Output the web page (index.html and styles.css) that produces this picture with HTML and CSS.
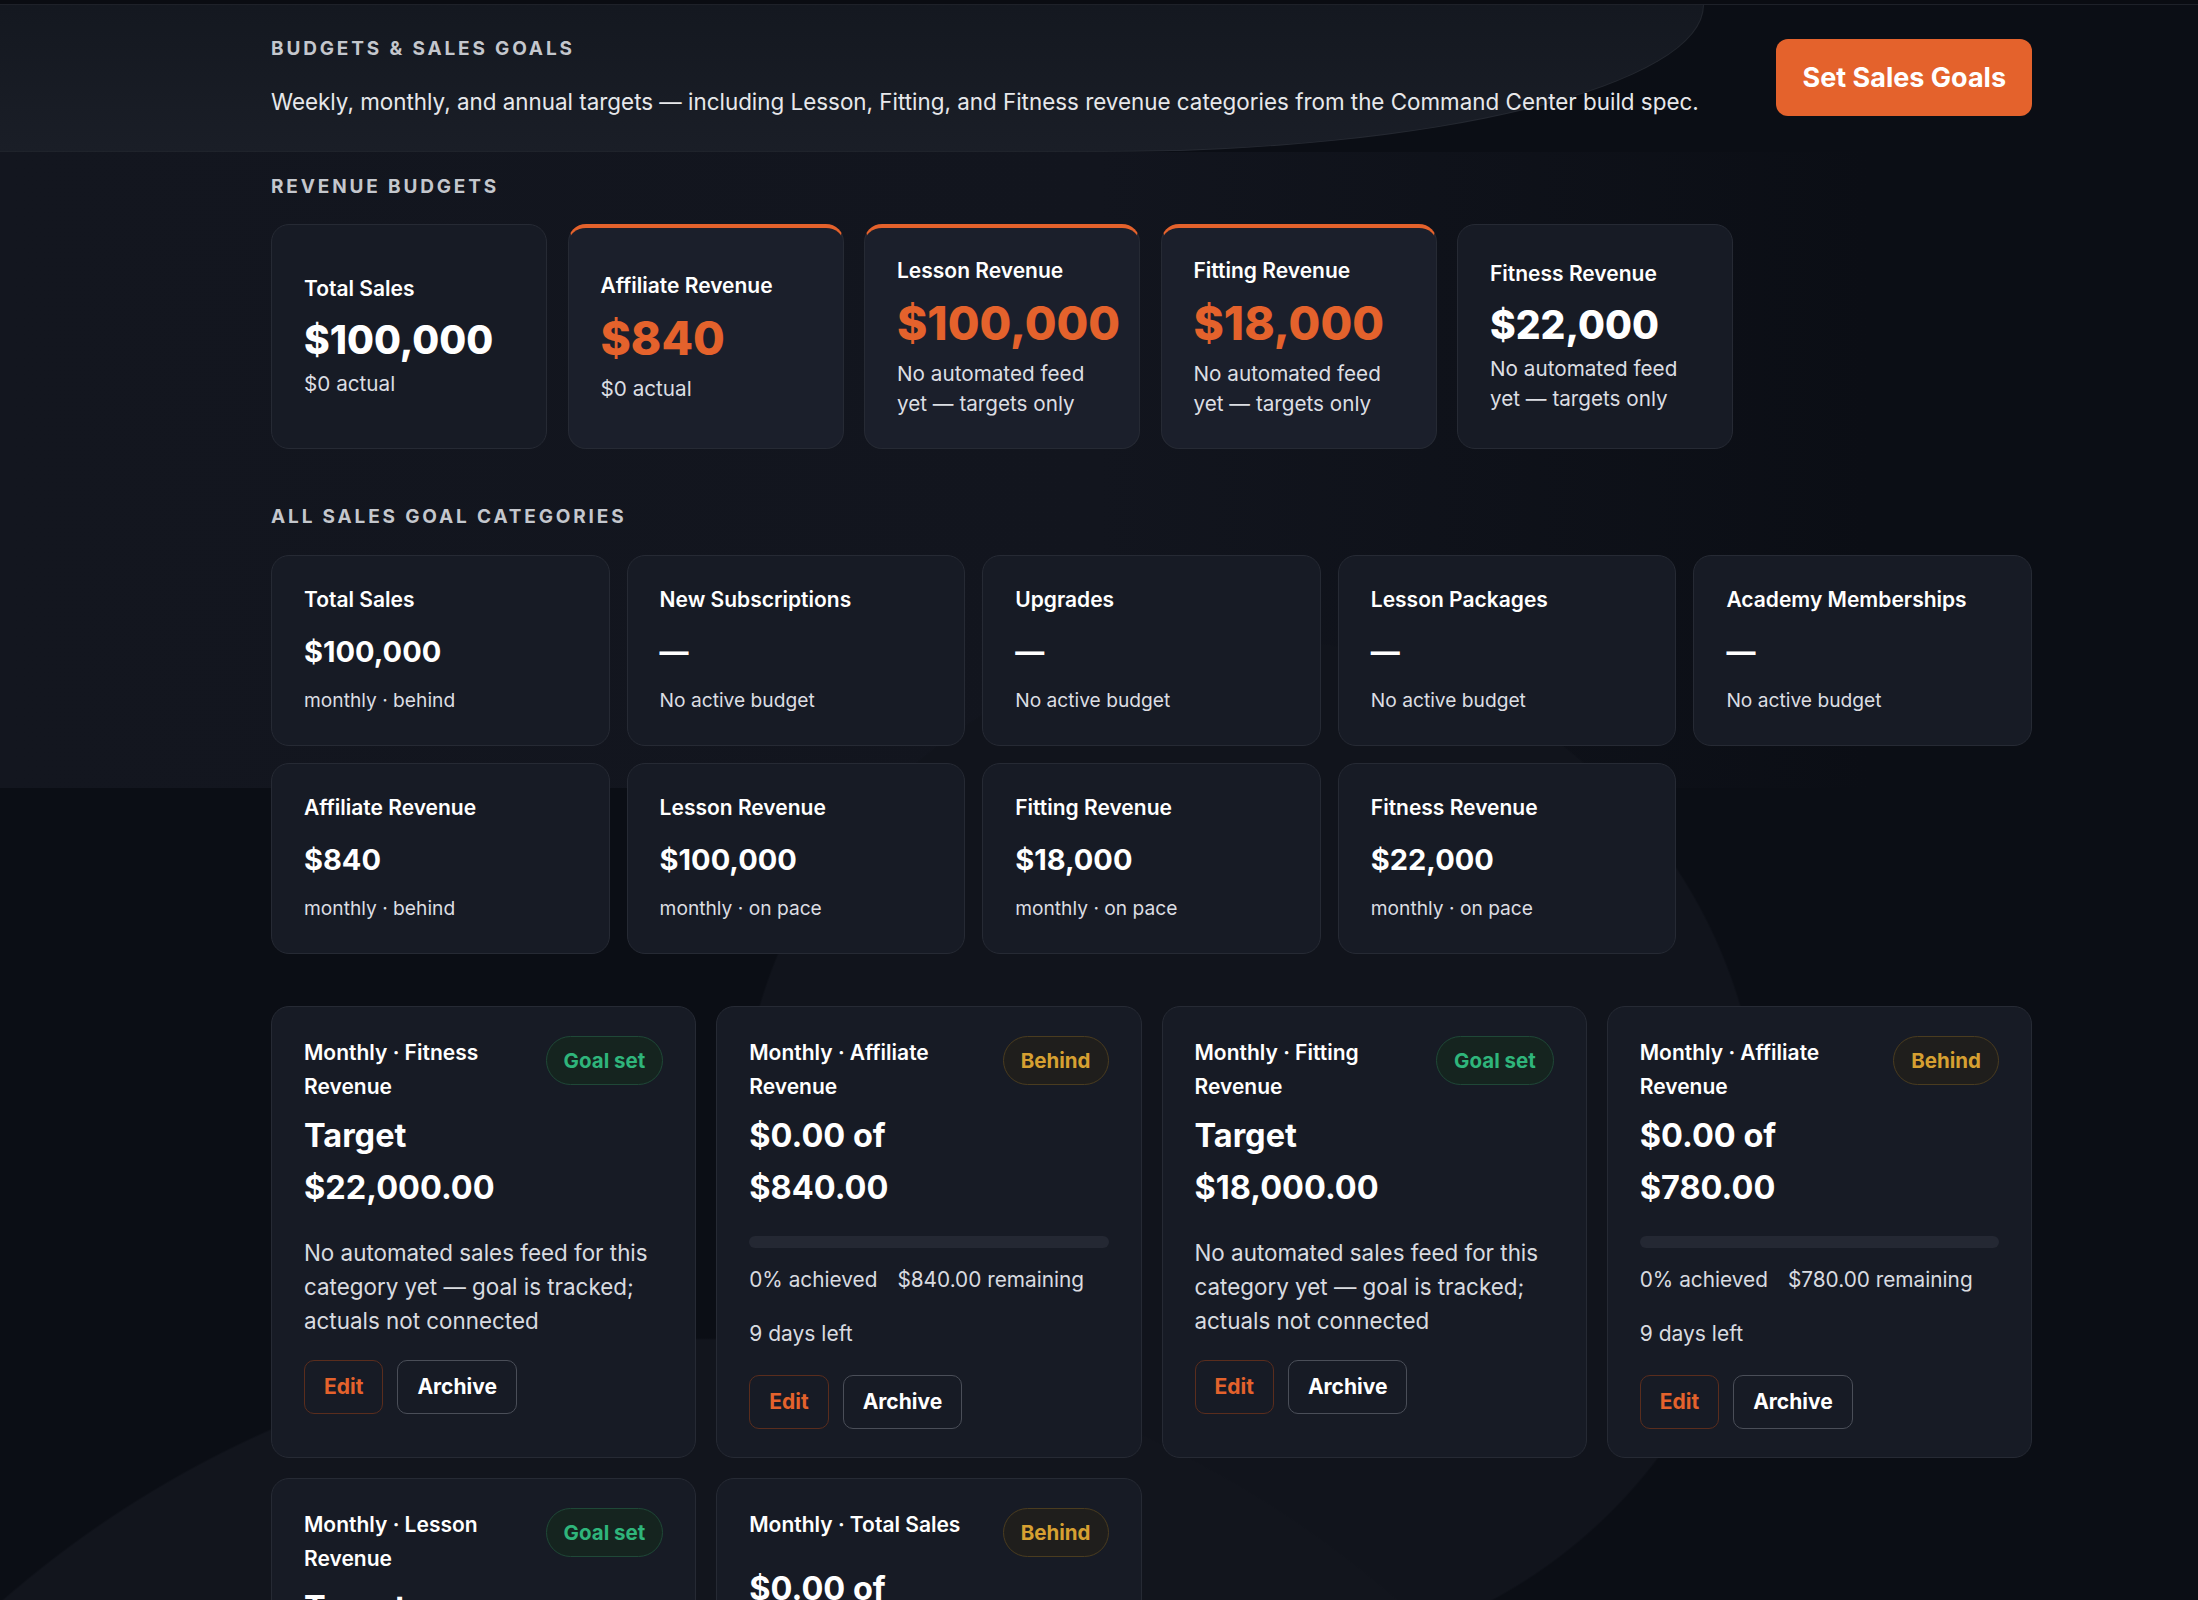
FILE: index.html
```html
<!DOCTYPE html>
<html>
<head>
    <title>Budgets &amp; Sales Goals</title>
    <link rel="stylesheet" href="styles.css">
</head>
<body>
    <div class="topbar"></div>

    <!-- Header -->
    <div class="hero">
        <div class="hero-inner">
            <div class="hero-text">
                <h1 class="section-title">Budgets &amp; Sales Goals</h1>
                <p class="hero-desc">Weekly, monthly, and annual targets — including Lesson, Fitting, and Fitness revenue categories from the Command Center build spec.</p>
            </div>
            <button class="primary-btn">Set Sales Goals</button>
        </div>
    </div>

    <div class="page">
        <!-- Revenue Budgets -->
        <h2 class="section-title rev-heading">Revenue Budgets</h2>
        <div class="rev-grid">
            <div class="rev-card">
                <div class="rev-label">Total Sales</div>
                <div class="rev-value">$100,000</div>
                <div class="rev-sub">$0 actual</div>
            </div>
            <div class="rev-card accent">
                <div class="rev-label">Affiliate Revenue</div>
                <div class="rev-value">$840</div>
                <div class="rev-sub">$0 actual</div>
            </div>
            <div class="rev-card accent">
                <div class="rev-label">Lesson Revenue</div>
                <div class="rev-value">$100,000</div>
                <div class="rev-sub">No automated feed yet — targets only</div>
            </div>
            <div class="rev-card accent">
                <div class="rev-label">Fitting Revenue</div>
                <div class="rev-value">$18,000</div>
                <div class="rev-sub">No automated feed yet — targets only</div>
            </div>
            <div class="rev-card">
                <div class="rev-label">Fitness Revenue</div>
                <div class="rev-value">$22,000</div>
                <div class="rev-sub">No automated feed yet — targets only</div>
            </div>
        </div>

        <!-- All Categories -->
        <h2 class="section-title cat-heading">All Sales Goal Categories</h2>
        <div class="cat-grid">
            <div class="cat-card">
                <div class="cat-label">Total Sales</div>
                <div class="cat-value">$100,000</div>
                <div class="cat-sub">monthly · behind</div>
            </div>
            <div class="cat-card">
                <div class="cat-label">New Subscriptions</div>
                <div class="cat-value">—</div>
                <div class="cat-sub">No active budget</div>
            </div>
            <div class="cat-card">
                <div class="cat-label">Upgrades</div>
                <div class="cat-value">—</div>
                <div class="cat-sub">No active budget</div>
            </div>
            <div class="cat-card">
                <div class="cat-label">Lesson Packages</div>
                <div class="cat-value">—</div>
                <div class="cat-sub">No active budget</div>
            </div>
            <div class="cat-card">
                <div class="cat-label">Academy Memberships</div>
                <div class="cat-value">—</div>
                <div class="cat-sub">No active budget</div>
            </div>
            <div class="cat-card">
                <div class="cat-label">Affiliate Revenue</div>
                <div class="cat-value">$840</div>
                <div class="cat-sub">monthly · behind</div>
            </div>
            <div class="cat-card">
                <div class="cat-label">Lesson Revenue</div>
                <div class="cat-value">$100,000</div>
                <div class="cat-sub">monthly · on pace</div>
            </div>
            <div class="cat-card">
                <div class="cat-label">Fitting Revenue</div>
                <div class="cat-value">$18,000</div>
                <div class="cat-sub">monthly · on pace</div>
            </div>
            <div class="cat-card">
                <div class="cat-label">Fitness Revenue</div>
                <div class="cat-value">$22,000</div>
                <div class="cat-sub">monthly · on pace</div>
            </div>
        </div>

        <!-- Goal Cards -->
        <div class="goal-grid">
            <div class="goal-card">
                <div class="goal-head">
                    <div class="goal-title">Monthly · Fitness Revenue</div>
                    <span class="badge badge-set">Goal set</span>
                </div>
                <div class="goal-value"><span>Target</span><span>$22,000.00</span></div>
                <p class="goal-note">No automated sales feed for this category yet — goal is tracked; actuals not connected</p>
                <div class="goal-actions">
                    <button class="btn-edit">Edit</button>
                    <button class="btn-archive">Archive</button>
                </div>
            </div>
            <div class="goal-card">
                <div class="goal-head">
                    <div class="goal-title">Monthly · Affiliate Revenue</div>
                    <span class="badge badge-behind">Behind</span>
                </div>
                <div class="goal-value"><span>$0.00 of</span><span>$840.00</span></div>
                <div class="progress"><div class="progress-fill" style="width: 0%"></div></div>
                <div class="goal-stats"><span>0% achieved</span><span>$840.00 remaining</span></div>
                <div class="goal-days">9 days left</div>
                <div class="goal-actions spaced">
                    <button class="btn-edit">Edit</button>
                    <button class="btn-archive">Archive</button>
                </div>
            </div>
            <div class="goal-card">
                <div class="goal-head">
                    <div class="goal-title">Monthly · Fitting Revenue</div>
                    <span class="badge badge-set">Goal set</span>
                </div>
                <div class="goal-value"><span>Target</span><span>$18,000.00</span></div>
                <p class="goal-note">No automated sales feed for this category yet — goal is tracked; actuals not connected</p>
                <div class="goal-actions">
                    <button class="btn-edit">Edit</button>
                    <button class="btn-archive">Archive</button>
                </div>
            </div>
            <div class="goal-card">
                <div class="goal-head">
                    <div class="goal-title">Monthly · Affiliate Revenue</div>
                    <span class="badge badge-behind">Behind</span>
                </div>
                <div class="goal-value"><span>$0.00 of</span><span>$780.00</span></div>
                <div class="progress"><div class="progress-fill" style="width: 0%"></div></div>
                <div class="goal-stats"><span>0% achieved</span><span>$780.00 remaining</span></div>
                <div class="goal-days">9 days left</div>
                <div class="goal-actions spaced">
                    <button class="btn-edit">Edit</button>
                    <button class="btn-archive">Archive</button>
                </div>
            </div>
            <div class="goal-card">
                <div class="goal-head">
                    <div class="goal-title">Monthly · Lesson Revenue</div>
                    <span class="badge badge-set">Goal set</span>
                </div>
                <div class="goal-value"><span>Target</span><span>$100,000.00</span></div>
                <p class="goal-note">No automated sales feed for this category yet — goal is tracked; actuals not connected</p>
                <div class="goal-actions">
                    <button class="btn-edit">Edit</button>
                    <button class="btn-archive">Archive</button>
                </div>
            </div>
            <div class="goal-card">
                <div class="goal-head">
                    <div class="goal-title">Monthly · Total Sales</div>
                    <span class="badge badge-behind">Behind</span>
                </div>
                <div class="goal-value"><span>$0.00 of</span><span>$100,000.00</span></div>
                <div class="progress"><div class="progress-fill" style="width: 0%"></div></div>
                <div class="goal-stats"><span>0% achieved</span><span>$100,000.00 remaining</span></div>
                <div class="goal-days">9 days left</div>
                <div class="goal-actions spaced">
                    <button class="btn-edit">Edit</button>
                    <button class="btn-archive">Archive</button>
                </div>
            </div>
        </div>
    </div>
</body>
</html>
```

FILE: styles.css
```css
/* General Styles */
* {
    box-sizing: border-box;
}

body {
    margin: 0;
    font-family: Inter, "Noto Sans", sans-serif;
    color: #ffffff;
    background:
        radial-gradient(circle at 700px 2400px, #12151d 0 1060px, transparent 1062px),
        radial-gradient(circle at 1250px 1150px, #11141c 0 510px, transparent 512px),
        linear-gradient(to right, #13161f 0, #12151e 50%, rgba(11, 14, 21, 0) 85%) 0 152px / 100% 636px no-repeat,
        #0b0e15;
}

button {
    font-family: inherit;
    cursor: pointer;
}

.topbar {
    height: 5px;
    background: #0a0c12;
    border-bottom: 1px solid #1e2129;
}

/* Header */
.hero {
    position: relative;
}

.hero::before {
    content: "";
    position: absolute;
    left: 0;
    top: 0;
    bottom: 0;
    width: 1703px;
    background: linear-gradient(#141820, #1a1e27);
    border-right: 1px solid rgba(255, 255, 255, 0.06);
    border-bottom: 1px solid rgba(255, 255, 255, 0.05);
    border-bottom-right-radius: 600px 147px;
}

.hero-inner {
    position: relative;
    display: flex;
    align-items: center;
    justify-content: space-between;
    width: 1761px;
    margin-left: 271px;
    padding: 32px 0 34px;
}

.section-title {
    margin: 0;
    font-size: 19px;
    font-weight: 700;
    line-height: 24px;
    letter-spacing: 0.15em;
    text-transform: uppercase;
    color: #c4c7cd;
}

.hero-desc {
    margin: 25px 0 0;
    font-size: 22.4px;
    line-height: 32px;
    color: #e7e8eb;
}

.primary-btn {
    height: 77px;
    padding: 0 26px;
    background: #e4622c;
    color: #ffffff;
    border: none;
    border-radius: 12px;
    font-size: 27px;
    font-weight: 700;
}

/* Page */
.page {
    width: 1761px;
    margin-left: 271px;
    padding-bottom: 60px;
}

.rev-heading {
    margin-top: 23px;
}

.cat-heading {
    margin-top: 56px;
}

/* Revenue Budgets */
.rev-grid {
    display: grid;
    grid-template-columns: repeat(5, 276px);
    gap: 20.5px;
    margin-top: 25px;
}

.rev-card {
    display: flex;
    flex-direction: column;
    justify-content: center;
    padding: 29px 32px;
    background: #171b25;
    border: 1px solid #262a34;
    border-radius: 18px;
}

.rev-card.accent {
    background: #1b1f2b;
    border-top: 4px solid #e4622c;
}

.rev-label {
    font-size: 21px;
    font-weight: 600;
    line-height: 28px;
}

.rev-value {
    margin-top: 13px;
    font-size: 39px;
    font-weight: 800;
    line-height: 47px;
}

.rev-card.accent .rev-value {
    margin-top: 11px;
    font-size: 46px;
    line-height: 55px;
    color: #e4622c;
}

.rev-sub {
    margin-top: 6px;
    font-size: 20.7px;
    line-height: 30px;
    color: #dcdee3;
}

.rev-card.accent .rev-sub {
    margin-top: 8px;
}

/* Categories */
.cat-grid {
    display: grid;
    grid-template-columns: repeat(5, 1fr);
    gap: 17px;
    margin-top: 26px;
}

.cat-card {
    padding: 30px 32px;
    background: #171b25;
    border: 1px solid #262a34;
    border-radius: 18px;
}

.cat-label {
    font-size: 21px;
    font-weight: 600;
    line-height: 28px;
}

.cat-value {
    margin-top: 20px;
    font-size: 29px;
    font-weight: 700;
    line-height: 35px;
}

.cat-sub {
    margin-top: 16px;
    font-size: 19.2px;
    line-height: 30px;
    color: #dcdee3;
}

/* Goal Cards */
.goal-grid {
    display: grid;
    grid-template-columns: repeat(4, 1fr);
    gap: 20px;
    margin-top: 52px;
}

.goal-card {
    display: flex;
    flex-direction: column;
    padding: 29px 32px 28px;
    background: #171b25;
    border: 1px solid #262a34;
    border-radius: 18px;
}

.goal-head {
    display: flex;
    align-items: flex-start;
    justify-content: space-between;
    gap: 16px;
}

.goal-title {
    font-size: 21px;
    font-weight: 600;
    line-height: 34px;
}

.badge {
    flex-shrink: 0;
    padding: 10px 17px;
    border-radius: 999px;
    font-size: 20.5px;
    font-weight: 700;
    line-height: 27px;
    white-space: nowrap;
}

.badge-set {
    color: #2fb57b;
    background: #15241f;
    border: 1px solid #1f4837;
}

.badge-behind {
    color: #d6a031;
    background: #1f1e1c;
    border: 1px solid #4a3c1f;
}

.goal-value {
    margin-top: 6px;
    font-size: 32.5px;
    font-weight: 700;
    line-height: 52px;
}

.goal-value span {
    display: block;
}

.goal-note {
    margin: 22px 0 0;
    font-size: 22.4px;
    line-height: 34px;
    color: #d9dbe0;
}

.progress {
    height: 12px;
    margin-top: 22px;
    background: #242833;
    border-radius: 6px;
    overflow: hidden;
}

.progress-fill {
    height: 100%;
    background: #e4622c;
}

.goal-stats {
    display: flex;
    gap: 20px;
    margin-top: 16px;
    font-size: 20.8px;
    line-height: 32px;
    color: #d9dbe0;
}

.goal-days {
    margin-top: 22px;
    font-size: 21px;
    line-height: 32px;
    color: #d9dbe0;
}

.goal-actions {
    display: flex;
    gap: 14px;
    margin-top: 22px;
}

.goal-actions.spaced {
    margin-top: 25px;
}

.btn-edit,
.btn-archive {
    padding: 12px 19px;
    background: transparent;
    border-radius: 10px;
    font-size: 21px;
    font-weight: 700;
    line-height: 28px;
}

.btn-edit {
    color: #e4622c;
    border: 1px solid #5a2d1d;
}

.btn-archive {
    color: #ffffff;
    border: 1px solid #4a4e58;
}
```
